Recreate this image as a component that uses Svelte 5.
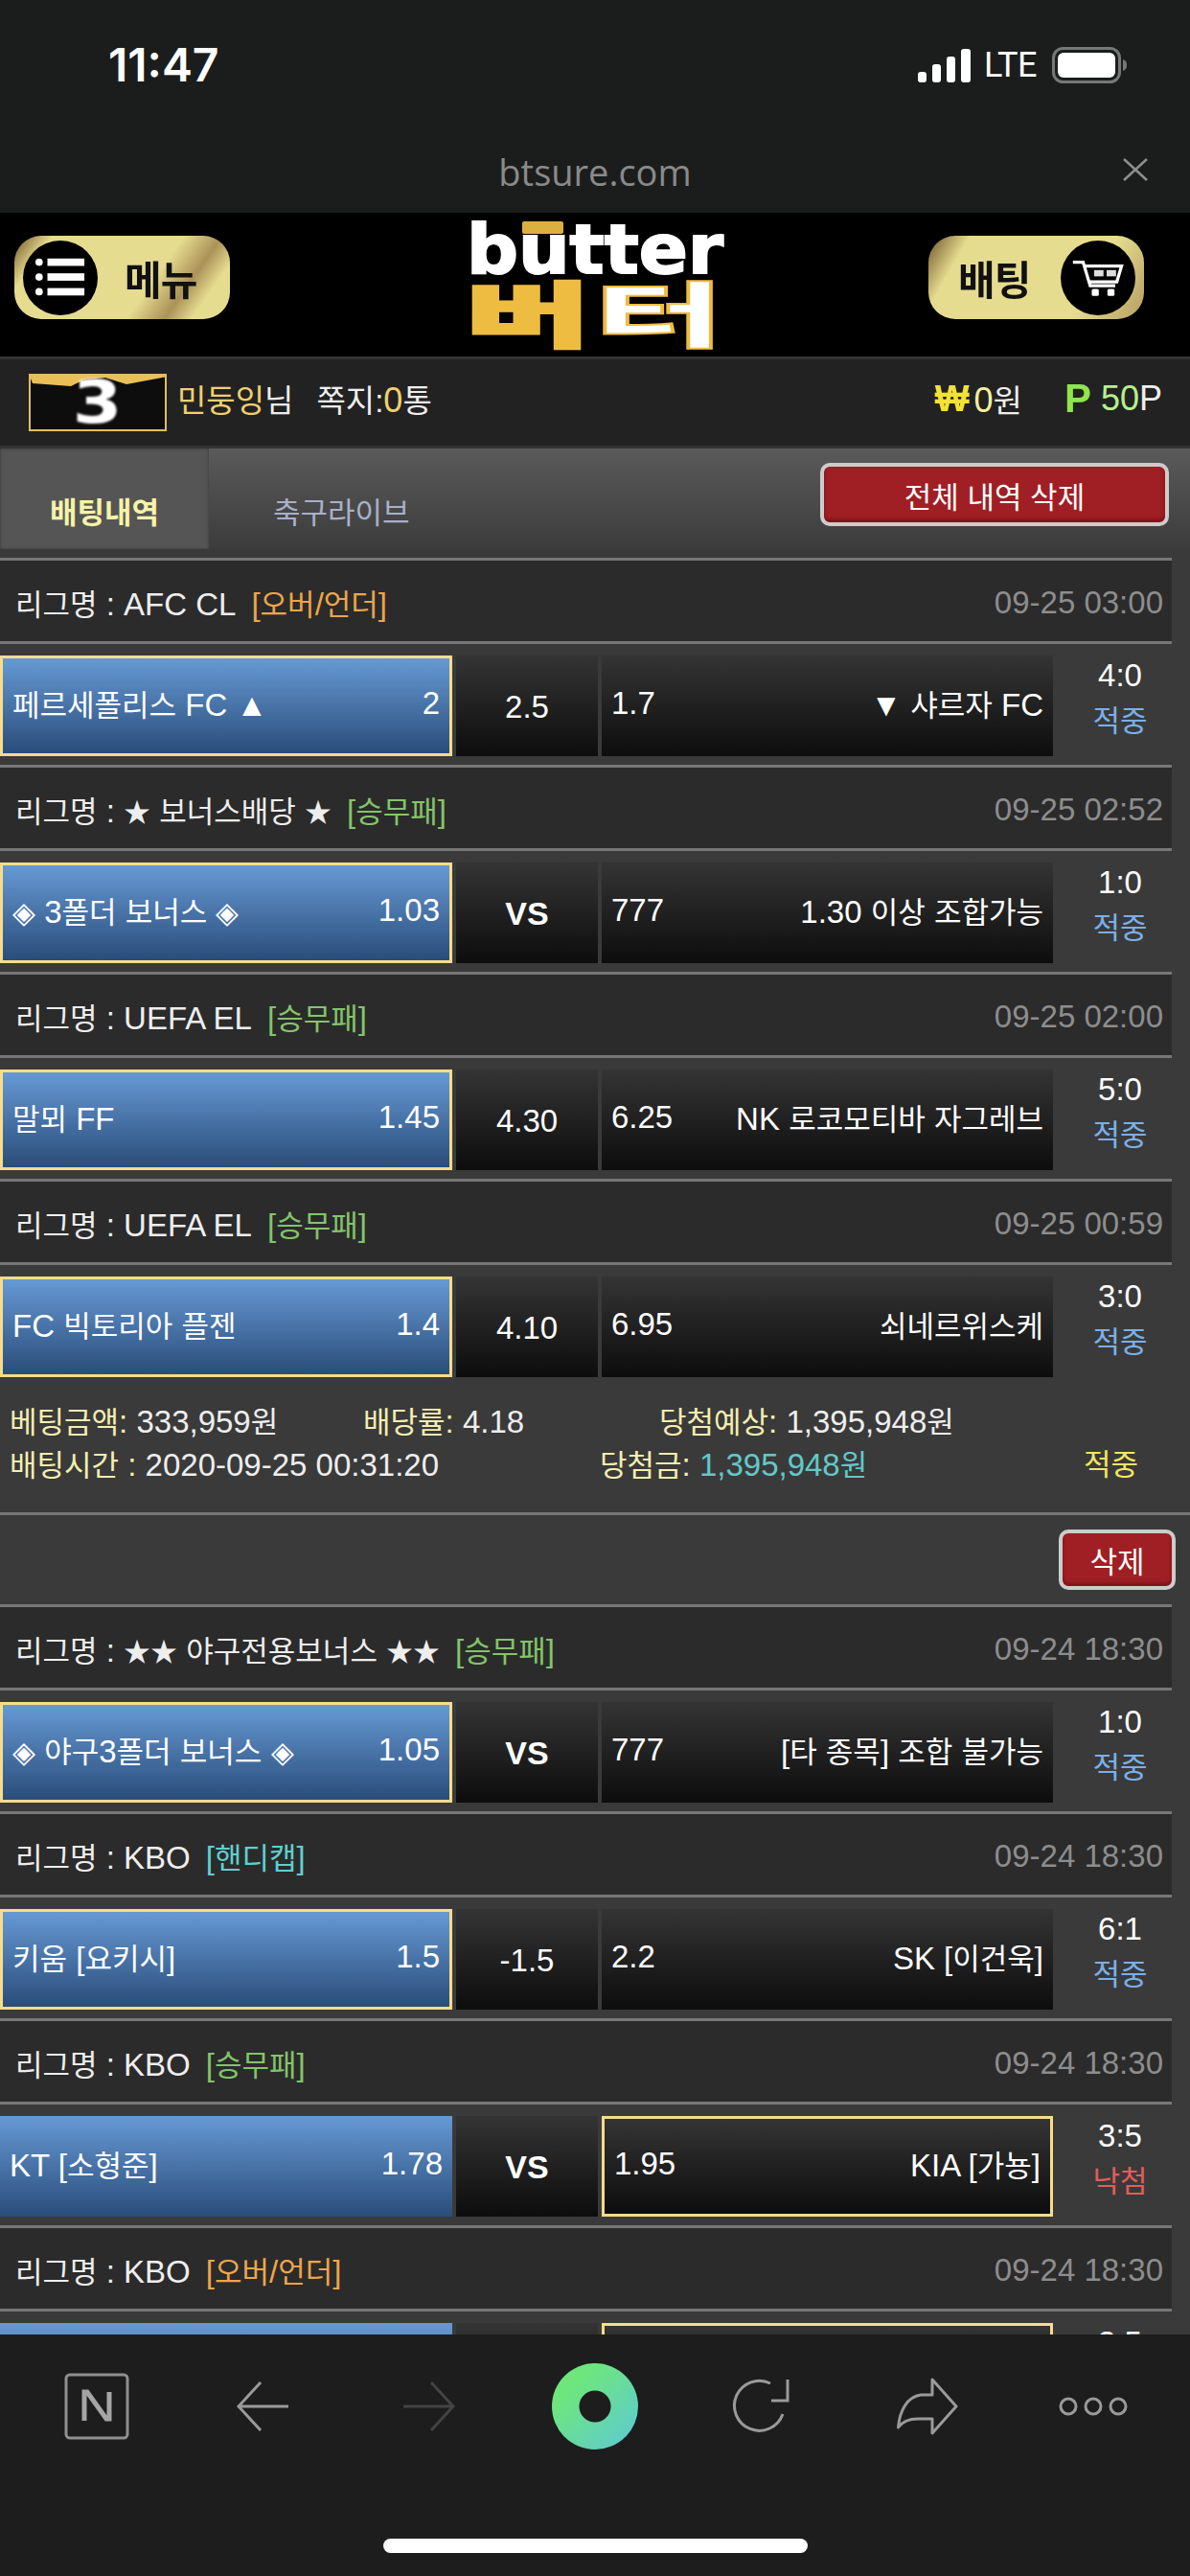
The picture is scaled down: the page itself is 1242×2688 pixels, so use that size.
<script>
	const games = [
		{ league: 'AFC CL', tag: '오버/언더', tagType: 'over', date: '09-25 03:00', home: '페르세폴리스 FC ▲', homeVal: '2', mid: '2.5', awayVal: '1.7', away: '▼ 샤르자 FC', score: '4:0', result: '적중', pick: 'home' },
		{ league: '★ 보너스배당 ★', tag: '승무패', tagType: 'win', date: '09-25 02:52', home: '◈ 3폴더 보너스 ◈', homeVal: '1.03', mid: 'VS', awayVal: '777', away: '1.30 이상 조합가능', score: '1:0', result: '적중', pick: 'home' },
		{ league: 'UEFA EL', tag: '승무패', tagType: 'win', date: '09-25 02:00', home: '말뫼 FF', homeVal: '1.45', mid: '4.30', awayVal: '6.25', away: 'NK 로코모티바 자그레브', score: '5:0', result: '적중', pick: 'home' },
		{ league: 'UEFA EL', tag: '승무패', tagType: 'win', date: '09-25 00:59', home: 'FC 빅토리아 플젠', homeVal: '1.4', mid: '4.10', awayVal: '6.95', away: '쇠네르위스케', score: '3:0', result: '적중', pick: 'home', detail: true },
		{ league: '★★ 야구전용보너스 ★★', tag: '승무패', tagType: 'win', date: '09-24 18:30', home: '◈ 야구3폴더 보너스 ◈', homeVal: '1.05', mid: 'VS', awayVal: '777', away: '[타 종목] 조합 불가능', score: '1:0', result: '적중', pick: 'home' },
		{ league: 'KBO', tag: '핸디캡', tagType: 'handi', date: '09-24 18:30', home: '키움 [요키시]', homeVal: '1.5', mid: '-1.5', awayVal: '2.2', away: 'SK [이건욱]', score: '6:1', result: '적중', pick: 'home' },
		{ league: 'KBO', tag: '승무패', tagType: 'win', date: '09-24 18:30', home: 'KT [소형준]', homeVal: '1.78', mid: 'VS', awayVal: '1.95', away: 'KIA [가뇽]', score: '3:5', result: '낙첨', pick: 'away' },
		{ league: 'KBO', tag: '오버/언더', tagType: 'over', date: '09-24 18:30', home: '', homeVal: '', mid: '', awayVal: '', away: '', score: '3:5', result: '낙첨', pick: 'away' }
	];

	// hangul runs get a smaller size than the latin digits around them, stars smaller still
	const runs = (text) =>
		text.split(/([\uAC00-\uD7A3◈]+|★+)/).map((s, i) => ({
			s,
			cls: i % 2 === 0 ? '' : s[0] === '★' ? 'star' : 'ko'
		}));
</script>

{#snippet t(text)}{#each runs(text) as r}{#if r.cls}<span class={r.cls}>{r.s}</span>{:else}{r.s}{/if}{/each}{/snippet}

<div class="phone">
	<!-- iOS status bar -->
	<div class="status">
		<span class="time">11:47</span>
		<div class="status-right">
			<svg class="signal" width="55" height="35" viewBox="0 0 55 35">
				<rect x="0" y="24" width="9" height="11" rx="3" fill="#fff" />
				<rect x="15" y="16" width="9" height="19" rx="3" fill="#fff" />
				<rect x="30" y="8" width="9" height="27" rx="3" fill="#fff" />
				<rect x="45" y="0" width="10" height="35" rx="3" fill="#fff" />
			</svg>
			<span class="lte">LTE</span>
			<svg class="battery" width="79" height="38" viewBox="0 0 79 38">
				<rect x="1.5" y="1.5" width="69" height="35" rx="10" fill="none" stroke="#777" stroke-width="3" />
				<rect x="6" y="6" width="60" height="26" rx="6" fill="#fff" />
				<path d="M74 13c3 1 4 3 4 6s-1 5-4 6z" fill="#777" />
			</svg>
		</div>
	</div>

	<!-- browser address bar -->
	<div class="address">
		<span class="url">btsure.com</span>
		<svg class="close" width="26" height="24" viewBox="0 0 26 24">
			<path d="M1 1L25 23M25 1L1 23" stroke="#8e8e8e" stroke-width="2.5" fill="none" />
		</svg>
	</div>

	<header class="top">
		<button class="gold-btn menu">
			<span class="disc">
				<svg width="56" height="48" viewBox="0 0 56 48">
					<g fill="#fff">
						<circle cx="5" cy="7" r="4" />
						<circle cx="5" cy="23" r="4" />
						<circle cx="5" cy="39" r="4" />
						<rect x="14" y="3" width="40" height="8" />
						<rect x="14" y="19" width="40" height="8" />
						<rect x="14" y="35" width="40" height="8" />
					</g>
				</svg>
			</span>
			<span class="gold-label">메뉴</span>
		</button>

		<svg class="logo" width="263" height="142" viewBox="0 0 263 142">
			<text class="logo-en" x="-3" y="54" textLength="268" lengthAdjust="spacingAndGlyphs">butter</text>
			<rect x="55" y="0" width="43" height="13" rx="2" fill="#dcb040" />
			<text class="logo-ko gold" x="-4" y="125" textLength="130" lengthAdjust="spacingAndGlyphs">버</text>
			<text class="logo-ko white" x="130" y="125" textLength="135" lengthAdjust="spacingAndGlyphs">터</text>
		</svg>

		<button class="gold-btn bet">
			<span class="gold-label">배팅</span>
			<span class="disc">
				<svg width="66" height="48" viewBox="0 0 66 48">
					<g fill="none" stroke="#fff" stroke-width="4">
						<path d="M1 4h13l9 30h32" />
						<path d="M16 9h47l-6 20H22" />
					</g>
					<rect x="28" y="14" width="12" height="8" fill="#ddd" />
					<rect x="44" y="14" width="12" height="8" fill="#ddd" />
					<rect x="25" y="38" width="9" height="9" rx="2" fill="#fff" />
					<rect x="45" y="38" width="9" height="9" rx="2" fill="#fff" />
				</svg>
			</span>
		</button>
	</header>

	<div class="info">
		<div class="level">
			<svg class="crown" width="144" height="60" viewBox="0 0 144 60">
				<path d="M0 0h144v3l-42 8-22-7-22 2-14 7L4 10z" fill="#e9bf58" />
			</svg>
			<span>3</span>
		</div>
		<span class="nick"><em>민둥잉</em>님</span>
		<span class="note">쪽지:<em class="num">0</em>통</span>
		<div class="money">
			<b class="won">₩</b>
			<span class="won-val"><i class="num">0</i>원</span>
			<b class="pt">P</b>
			<span class="pt-val"><i class="num">50</i><span class="num">P</span></span>
		</div>
	</div>

	<div class="tabs">
		<div class="tab active">배팅내역</div>
		<div class="tab">축구라이브</div>
		<button class="red-btn all">전체 내역 삭제</button>
	</div>

	<div class="list">
		{#each games as g}
			<div class="league">
				<span>{@render t('리그명 : ' + g.league)}<span class="tag {g.tagType}">{@render t('[' + g.tag + ']')}</span></span>
				<span class="date">{g.date}</span>
			</div>
			<div class="match">
				<div class="cell home" class:picked={g.pick === 'home'}>
					<span>{@render t(g.home)}</span><span>{g.homeVal}</span>
				</div>
				<div class="cell mid" class:vs={g.mid === 'VS'}>{g.mid}</div>
				<div class="cell away" class:picked={g.pick === 'away'}>
					<span>{g.awayVal}</span><span>{@render t(g.away)}</span>
				</div>
				<div class="score">
					<span>{g.score}</span>
					<span class={g.result === '적중' ? 'hit' : 'miss'}>{g.result}</span>
				</div>
			</div>
			{#if g.detail}
				<div class="detail">
					<div class="detail-row first">
						<span>{@render t('베팅금액:')} <b>333,959{@render t('원')}</b></span>
						<span>{@render t('배당률:')} <b>4.18</b></span>
						<span>{@render t('당첨예상:')} <b>1,395,948{@render t('원')}</b></span>
					</div>
					<div class="detail-row second">
						<span>{@render t('배팅시간 :')} <b>2020-09-25 00:31:20</b></span>
						<span>{@render t('당첨금:')} <b class="paid">1,395,948{@render t('원')}</b></span>
						<span class="final">적중</span>
					</div>
				</div>
				<div class="delete-row">
					<button class="red-btn del">삭제</button>
				</div>
			{/if}
		{/each}
	</div>

	<!-- browser toolbar -->
	<footer class="toolbar">
		<div class="tools">
			<svg width="68" height="70" viewBox="0 0 68 70">
				<rect x="2" y="2" width="64" height="66" rx="4" fill="none" stroke="#8f8f8f" stroke-width="3" />
				<path d="M21 50V20h3l20 28h3V20" fill="none" stroke="#a5a5a5" stroke-width="5" />
			</svg>
			<svg width="54" height="52" viewBox="0 0 54 52">
				<path d="M25 1L2 26l23 25M3 26h51" fill="none" stroke="#9a9a9a" stroke-width="3" />
			</svg>
			<svg width="54" height="52" viewBox="0 0 54 52">
				<path d="M29 1l23 25-23 25M51 26H0" fill="none" stroke="#444" stroke-width="3" />
			</svg>
			<span class="ring"></span>
			<svg width="60" height="60" viewBox="0 0 60 60">
				<path d="M53 38A26 26 0 1 1 40 6" fill="none" stroke="#9a9a9a" stroke-width="3" />
				<path d="M58 2v22H41" fill="none" stroke="#9a9a9a" stroke-width="3" />
			</svg>
			<svg width="64" height="60" viewBox="0 0 64 60">
				<path d="M37 2l25 28-25 28V43H22C12 43 5 47 1.500 52 3 34 11 20 25 18h12z" fill="none" stroke="#9a9a9a" stroke-width="3" stroke-linejoin="round" />
			</svg>
			<svg width="72" height="22" viewBox="0 0 72 22">
				<g fill="none" stroke="#9a9a9a" stroke-width="3">
					<circle cx="10" cy="11" r="8" />
					<circle cx="36" cy="11" r="8" />
					<circle cx="62" cy="11" r="8" />
				</g>
			</svg>
		</div>
		<div class="home-bar"></div>
	</footer>
</div>

<style>
	:global(body) {
		margin: 0;
		background: #3a3a3a;
	}

	.phone {
		width: 1242px;
		height: 2688px;
		display: flex;
		flex-direction: column;
		overflow: hidden;
		background: #3a3a3a;
		color: #eee;
		font-family: "Liberation Sans", "Noto Sans CJK KR", sans-serif;
		font-size: 33px;
	}

	em, i {
		font-style: normal;
	}

	.ko {
		font-size: 31px;
	}

	.star {
		font-size: 28px;
	}

	.num {
		font-size: 36px;
	}

	button {
		font-family: inherit;
		padding: 0;
		cursor: pointer;
	}

	/* status + address */
	.status {
		height: 130px;
		flex: none;
		box-sizing: border-box;
		padding: 44px 65px 0 113px;
		display: flex;
		justify-content: space-between;
		align-items: flex-start;
		background: #1b1d1c;
		color: #fff;
	}

	.time {
		font-family: Inter, sans-serif;
		font-size: 48px;
		font-weight: 600;
		line-height: 48px;
	}

	.status-right {
		display: flex;
		align-items: center;
		height: 48px;
	}

	.lte {
		font-family: Roboto, sans-serif;
		font-size: 36px;
		margin: 0 16px 0 14px;
		letter-spacing: -0.5px;
	}

	.address {
		height: 92px;
		flex: none;
		position: relative;
		background: #1b1d1c;
		text-align: center;
		box-sizing: border-box;
		padding-top: 24px;
	}

	.url {
		font-family: "Open Sans", sans-serif;
		font-size: 38px;
		line-height: 50px;
		color: #8a8a8a;
	}

	.close {
		position: absolute;
		left: 1172px;
		top: 35px;
	}

	/* header */
	.top {
		height: 150px;
		flex: none;
		background: #000;
		display: flex;
		justify-content: space-between;
		align-items: flex-start;
		padding: 0 48px 0 15px;
		box-sizing: border-box;
		position: relative;
	}

	.gold-btn {
		width: 225px;
		height: 87px;
		margin-top: 24px;
		border: 0;
		border-radius: 28px;
		display: flex;
		align-items: center;
		color: #111;
	}

	.menu {
		background: linear-gradient(125deg, #6f5228 0%, #e6dc90 14%, #e6dc90 62%, #ab9258 76%, #e6dc90 86%);
		padding-left: 9px;
		gap: 28px;
	}

	.bet {
		background: linear-gradient(120deg, #6f5228 0%, #e6dc90 16%, #e6dc90 72%, #b69e60 100%);
		padding-left: 31px;
		gap: 32px;
	}

	.gold-label {
		font-size: 42px;
		font-weight: 700;
		filter: blur(0.6px);
		letter-spacing: -1px;
		white-space: nowrap;
	}

	.disc {
		width: 78px;
		height: 78px;
		border-radius: 50%;
		background: #000;
		flex: none;
		display: flex;
		align-items: center;
		justify-content: center;
	}

	.disc svg {
		width: 54px;
		filter: blur(0.5px);
	}

	.logo {
		position: absolute;
		left: 490px;
		top: 9px;
		overflow: visible;
	}

	.logo-en {
		font-family: "DejaVu Sans", sans-serif;
		font-weight: 700;
		font-size: 72px;
		fill: #fff;
		stroke: #fff;
		stroke-width: 2px;
	}

	.logo-ko {
		font-family: "Noto Sans CJK KR", sans-serif;
		font-weight: 900;
		font-size: 74px;
	}

	.logo-ko.gold {
		fill: #efbc42;
		stroke: #efbc42;
		stroke-width: 3px;
	}

	.logo-ko.white {
		fill: #fff;
		stroke: #efbc42;
		stroke-width: 2px;
	}

	/* user info */
	.info {
		height: 93px;
		flex: none;
		box-sizing: border-box;
		border-top: 3px solid #333;
		background: #222;
		display: flex;
		align-items: center;
		padding: 0 29px 8px 30px;
	}

	.level {
		width: 144px;
		height: 60px;
		margin-top: 8px;
		box-sizing: border-box;
		border: 2px solid #e3bd66;
		background: #0d0d0d;
		position: relative;
		display: flex;
		align-items: center;
		justify-content: center;
		color: #fff;
		font-family: "DejaVu Sans", sans-serif;
		font-weight: 700;
		font-size: 62px;
		overflow: hidden;
		margin-right: 11px;
	}

	.level span {
		position: relative;
		filter: blur(1px);
		line-height: 60px;
		transform: scaleX(1.2);
	}

	.crown {
		position: absolute;
		left: -2px;
		top: -2px;
	}

	.nick em, .note em {
		color: #f0d070;
	}

	.nick {
		margin-right: 24px;
	}

	.money {
		margin-left: auto;
		display: flex;
		align-items: center;
	}

	.won, .pt {
		font-size: 42px;
		filter: blur(0.7px);
	}

	.won {
		color: #f2e234;
		margin-right: 5px;
		font-size: 38px;
	}

	.won-val i {
		color: #f6f0a0;
	}

	.pt {
		color: #8ee64c;
		margin: 0 10px 0 44px;
	}

	.pt-val i {
		color: #b6f08c;
	}

	/* tabs */
	.tabs {
		height: 108px;
		flex: none;
		box-sizing: border-box;
		border-top: 3px solid #333;
		background: linear-gradient(#5a5a5a, #3c3c3c);
		display: flex;
		position: relative;
	}

	.tab {
		width: 218px;
		height: 105px;
		box-sizing: border-box;
		padding-top: 46px;
		text-align: center;
		color: #a8b0c8;
		font-size: 31px;
		line-height: 44px;
		white-space: nowrap;
	}

	.tab + .tab {
		padding-left: 67px;
		width: 260px;
		text-align: left;
	}

	.tab.active {
		background: #555;
		box-shadow: inset 0 0 3px #333;
		color: #f6f3a8;
		font-weight: 700;
	}

	.red-btn {
		background: #a01f25;
		border: 4px solid #ccc;
		border-radius: 10px;
		color: #fff;
		font-size: 31px;
		box-shadow: inset 0 -3px 4px #7c1116;
	}

	.all {
		position: absolute;
		left: 856px;
		top: 15px;
		width: 364px;
		height: 66px;
	}

	/* bet list */
	.list {
		flex: 1;
		min-height: 0;
		overflow: hidden;
		padding-top: 9px;
	}

	.league {
		width: 1223px;
		height: 90px;
		box-sizing: border-box;
		border-top: 3px solid #777;
		border-bottom: 3px solid #777;
		background: #2b2b2b;
		display: flex;
		justify-content: space-between;
		align-items: center;
		padding: 2px 9px 0 16px;
		color: #eee;
		white-space: nowrap;
	}

	.tag {
		margin-left: 16px;
	}

	.tag.over {
		color: #eda64a;
	}

	.tag.win {
		color: #84c46a;
	}

	.tag.handi {
		color: #5fd0d0;
	}

	.date {
		color: #8d8d8d;
		padding-top: 2px;
	}

	.match {
		display: grid;
		grid-template-columns: 472px 148px 471px 120px;
		column-gap: 4px;
		height: 105px;
		padding: 12px 0 9px;
	}

	.cell {
		box-sizing: border-box;
		display: flex;
		justify-content: space-between;
		align-items: center;
		padding: 0 10px 6px;
		color: #fff;
		white-space: nowrap;
		background: linear-gradient(#343434, #0d0d0d);
	}

	.home {
		background: linear-gradient(#6699d4, #2a4d7a);
	}

	.picked {
		border: 3px solid #f8dc8c;
	}

	.mid {
		justify-content: center;
		padding: 2px 0 0;
	}

	.mid.vs {
		font-weight: 700;
		font-size: 34px;
	}

	.score {
		display: flex;
		flex-direction: column;
		align-items: center;
		line-height: 48px;
		margin-top: -3px;
		padding-left: 12px;
		color: #fff;
	}

	.score .hit, .score .miss {
		font-size: 31px;
	}

	.hit {
		color: #7ab0e8;
	}

	.miss {
		color: #e35c5c;
	}

	.detail {
		box-sizing: border-box;
		padding: 15px 0 27px 10px;
		border-bottom: 3px solid #777;
		height: 135px;
		color: #f5eeb0;
		white-space: nowrap;
	}

	.detail b {
		font-weight: 400;
		color: #eee;
	}

	.detail b.paid {
		color: #62c8c8;
	}

	.detail-row {
		display: grid;
		height: 45px;
		line-height: 45px;
	}

	.first {
		grid-template-columns: 369px 309px 1fr;
	}

	.second {
		grid-template-columns: 616px 505px 1fr;
	}

	.final {
		color: #f2e660;
		font-size: 31px;
	}

	.delete-row {
		height: 93px;
		box-sizing: border-box;
		padding: 15px 15px 0 0;
		display: flex;
		justify-content: flex-end;
	}

	.del {
		width: 122px;
		height: 63px;
	}

	/* toolbar */
	.toolbar {
		height: 252px;
		flex: none;
		background: #1d1d1d;
		box-sizing: border-box;
		padding-top: 30px;
		position: relative;
	}

	.tools {
		display: grid;
		grid-template-columns: repeat(7, 1fr);
		justify-items: center;
		align-items: center;
		height: 90px;
		padding: 0 14px;
	}

	.ring {
		width: 90px;
		height: 90px;
		box-sizing: border-box;
		border-radius: 50%;
		background:
			radial-gradient(circle, #1d1d1d 0 16px, transparent 17px),
			linear-gradient(135deg, #6ee67c 25%, #5cc8d8 100%);
	}

	.home-bar {
		width: 443px;
		height: 15px;
		margin: 93px auto 0;
		border-radius: 8px;
		background: #fff;
	}
</style>
